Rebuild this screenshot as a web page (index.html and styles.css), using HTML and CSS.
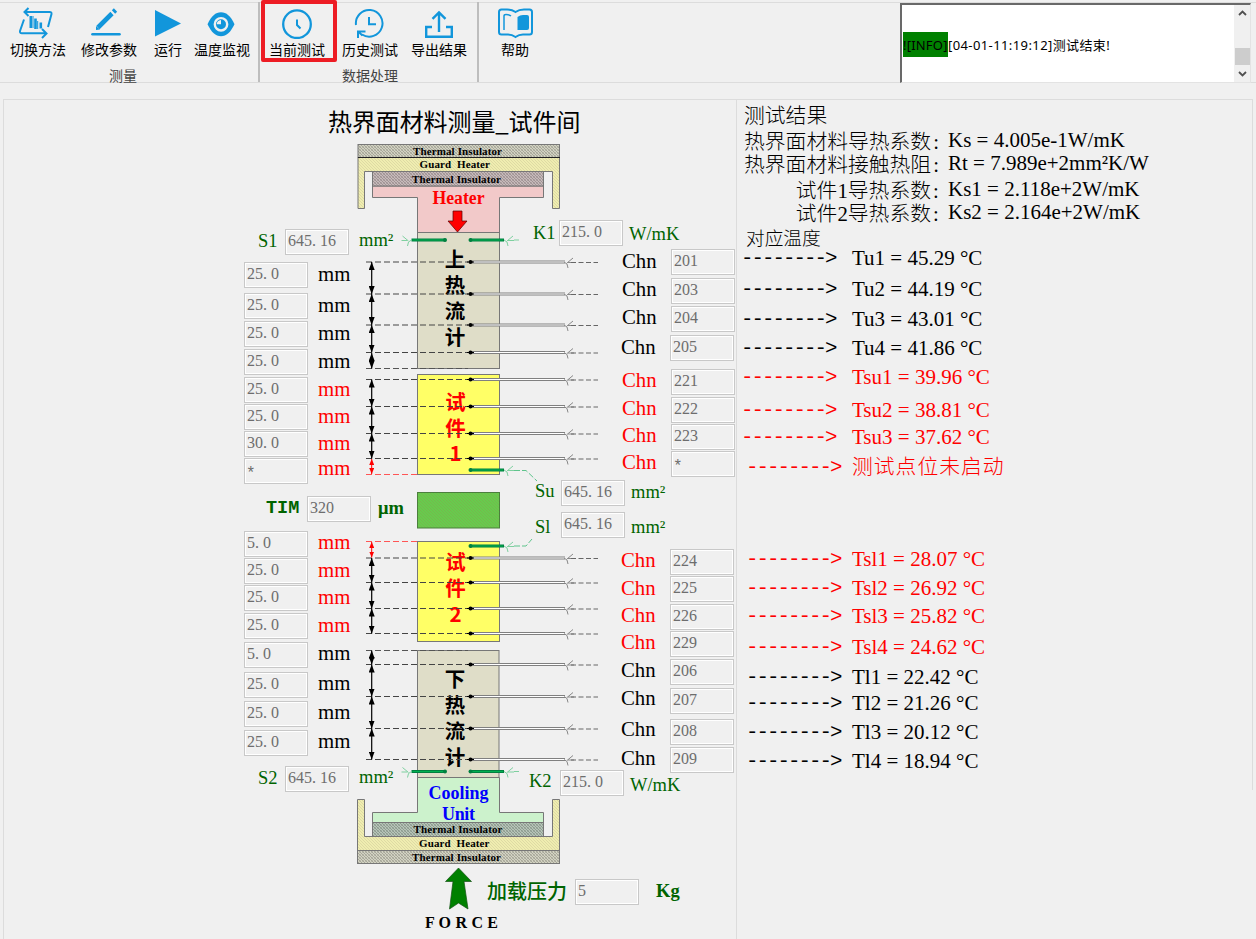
FILE: index.html
```html
<!DOCTYPE html>
<html lang="zh-CN">
<head>
<meta charset="utf-8">
<title>热界面材料测量</title>
<link rel="stylesheet" href="styles.css">
</head>
<body>
<header class="toolbar">
  <section class="group group-measure">
    <div class="buttons">
      <button class="tool w72"><svg class="icon shift-l3" width="36" height="34" viewBox="17 5 36 34"><g fill="none" stroke="#1296db" stroke-width="2"><path d="M25 12H49.500Q51.800 12 51.500 14L48 27M28.500 8L24.500 12L28.500 16M24 19.500L20 31Q19.500 33 22 33.300H46M42 29L46.500 33.500L42 38"/><path d="M30.800 16V28M35.500 18.500V29M40.800 22.500V28.500" stroke-width="2.600"/><path d="M33 16V28M37.700 21V29" stroke-width="1"/></g></svg><span>切换方法</span></button>
      <button class="tool w70"><svg class="icon shift-l3" width="36" height="34" viewBox="88 5 36 34"><g fill="none" stroke="#1296db"><path d="M98 27.500L112 13.500" stroke-width="4.600"/><path d="M113.500 12L115.500 10" stroke-width="4.600"/><path d="M92.500 34.200H119.500" stroke-width="2.600" stroke-linecap="round"/></g><path d="M96 30V26L100 29.500Z" fill="#1296db"/></svg><span>修改参数</span></button>
      <button class="tool w48"><svg class="icon" width="36" height="34" viewBox="150 5 36 34"><path d="M155 10L181 23.500L155 36.500Z" fill="#1296db"/></svg><span>运行</span></button>
      <button class="tool w60"><svg class="icon" width="36" height="34" viewBox="204.500 5 36 34"><path d="M208 24.300C212 16 216 12.300 221.500 12.300S231 16 235 24.300C231 32.500 227 36.300 221.500 36.300S212 32.500 208 24.300Z" fill="#1296db"/><circle cx="221.500" cy="24.300" r="6.200" fill="#1296db" stroke="#f0f0f0" stroke-width="2.400"/><path d="M221.500 20V24.300H217.200Q217.500 20.500 221.500 20Z" fill="#f0f0f0"/></svg><span>温度监视</span></button>
    </div>
    <div class="group-name">测量</div>
  </section>
  <section class="group group-data">
    <div class="buttons">
      <button class="tool current"><svg class="icon" width="36" height="34" viewBox="279 5 36 34"><circle cx="297" cy="24.200" r="13.800" fill="none" stroke="#1296db" stroke-width="2.300"/><path d="M297 19.500V25L300.500 28.500" fill="none" stroke="#1296db" stroke-width="2"/></svg><span>当前测试</span></button>
      <button class="tool w66"><svg class="icon" width="36" height="34" viewBox="352 5 36 34"><g fill="none" stroke="#1296db" stroke-width="2"><path d="M356 25A13.300 13.300 0 1 1 362 34.500"/><path d="M369 17V24.300H376"/><path d="M358 38V31.500H365.500M358 31.500L362.500 35.500"/></g></svg><span>历史测试</span></button>
      <button class="tool w72"><svg class="icon" width="36" height="34" viewBox="421 5 36 34"><g fill="none" stroke="#1296db" stroke-width="2.400"><path d="M432 27H426.200V36.800H451.800V27H446"/><path d="M439 32V13M432.500 18.800L439 12.500L445.500 18.800"/></g></svg><span>导出结果</span></button>
    </div>
    <div class="group-name">数据处理</div>
  </section>
  <section class="group group-help">
    <div class="buttons">
      <button class="tool w72"><svg class="icon" width="38" height="34" viewBox="496 5 38 34"><g fill="none" stroke="#1296db" stroke-width="2"><path d="M515.500 12Q512 9.500 507 9.500H501.500Q499 9.500 499 12V32Q499 34.500 501.500 34.500H508Q512 34.500 515.500 37Q519 34.500 523 34.500H529.500Q532 34.500 532 32V12Q532 9.500 529.500 9.500H524Q519 9.500 515.500 12Z"/><path d="M504 30V16Q504 14.500 506 14.500Q509 14.500 511 16" stroke-width="1.500"/></g><path d="M517.500 17Q520 15 523 15H527Q529 15 529 17V28Q529 30 527 30H517.500Z" fill="#1296db"/></svg><span>帮助</span></button>
    </div>
  </section>
  <div class="console">
    <p class="log"><span class="level">![INFO]</span><span class="entry">[04-01-11:19:12]测试结束!</span></p>
    <div class="scrollbar">
      <svg width="9" height="6" viewBox="0 0 9 6"><path d="M1 5L4.500 1.500L8 5" fill="none" stroke="#505050" stroke-width="1.800"/></svg>
      <i class="thumb"></i>
      <svg width="9" height="6" viewBox="0 0 9 6"><path d="M1 1L4.500 4.500L8 1" fill="none" stroke="#505050" stroke-width="1.800"/></svg>
    </div>
  </div>
</header>

<main class="workspace">
  <section class="rig">
    <h1 class="title">热界面材料测量_试件间</h1>
    <div class="rig-columns">
      <div class="lengths">
        <div class="row side-in"><b class="tag s-tag">S1</b><span class="field">645<i>.</i>16</span><b class="tag unit-up">mm²</b></div>
        <div class="row"><span class="field">25<i>.</i>0</span><b class="mm">mm</b></div>
        <div class="row"><span class="field">25<i>.</i>0</span><b class="mm">mm</b></div>
        <div class="row"><span class="field">25<i>.</i>0</span><b class="mm">mm</b></div>
        <div class="row"><span class="field">25<i>.</i>0</span><b class="mm">mm</b></div>
        <div class="row red"><span class="field">25<i>.</i>0</span><b class="mm">mm</b></div>
        <div class="row red"><span class="field">25<i>.</i>0</span><b class="mm">mm</b></div>
        <div class="row red"><span class="field">30<i>.</i>0</span><b class="mm">mm</b></div>
        <div class="row red"><span class="field star">*</span><b class="mm raised">mm</b></div>
        <div class="row tim-row"><b class="tag tim">TIM</b><span class="field">320</span><b class="tag strong">μm</b></div>
        <div class="row red"><span class="field">5<i>.</i>0</span><b class="mm raised1">mm</b></div>
        <div class="row red"><span class="field">25<i>.</i>0</span><b class="mm">mm</b></div>
        <div class="row red"><span class="field">25<i>.</i>0</span><b class="mm">mm</b></div>
        <div class="row red"><span class="field">25<i>.</i>0</span><b class="mm">mm</b></div>
        <div class="row"><span class="field">5<i>.</i>0</span><b class="mm raised1">mm</b></div>
        <div class="row"><span class="field">25<i>.</i>0</span><b class="mm raised1">mm</b></div>
        <div class="row"><span class="field">25<i>.</i>0</span><b class="mm raised1">mm</b></div>
        <div class="row"><span class="field">25<i>.</i>0</span><b class="mm raised1">mm</b></div>
        <div class="row side-in"><b class="tag s-tag">S2</b><span class="field">645<i>.</i>16</span><b class="tag unit-up">mm²</b></div>
      </div>

      <svg class="drawing" width="272" height="799" viewBox="350 140 272 799">
        <defs>
          <pattern id="hatch-gray" width="3" height="3" patternUnits="userSpaceOnUse"><rect width="3" height="3" fill="#d2d2c2"/><path d="M0 .5H1M1 1.500H2M2 2.500H3" stroke="#a6a698"/><path d="M2 .5H3M0 2.500H1" stroke="#babaac"/></pattern>
          <pattern id="hatch-rose" width="3" height="3" patternUnits="userSpaceOnUse"><rect width="3" height="3" fill="#c6baba"/><path d="M0 .5H1M1 1.500H2M2 2.500H3" stroke="#9f9293"/><path d="M2 .5H3M0 2.500H1" stroke="#b0a4a5"/></pattern>
          <pattern id="hatch-mint" width="3" height="3" patternUnits="userSpaceOnUse"><rect width="3" height="3" fill="#b6c4b8"/><path d="M0 .5H1M1 1.500H2M2 2.500H3" stroke="#8d9b8f"/><path d="M2 .5H3M0 2.500H1" stroke="#a0aea2"/></pattern>
          <pattern id="hatch-cream" width="3" height="3" patternUnits="userSpaceOnUse"><rect width="3" height="3" fill="#efedb0"/><path d="M0 .5H1M1 1.500H2M2 2.500H3" stroke="#dedaa4"/></pattern>
          <pattern id="hatch-green" width="3" height="3" patternUnits="userSpaceOnUse"><rect width="3" height="3" fill="#66cc4d"/><path d="M0 .5H1M1 1.500H2M2 2.500H3" stroke="#75b84d"/></pattern>
          <marker id="tip" viewBox="0 0 8 6" refX="8" refY="3" markerWidth="8" markerHeight="6" markerUnits="userSpaceOnUse" orient="auto-start-reverse"><path d="M0 0L8 3L0 6Z" fill="#000"/></marker>
          <marker id="tip-red" viewBox="0 0 6 5" refX="6" refY="2.500" markerWidth="6" markerHeight="5" markerUnits="userSpaceOnUse" orient="auto-start-reverse"><path d="M0 0L6 2.500L0 5Z" fill="#f00"/></marker>
          <g id="fork" fill="none"><path d="M0 0Q4 1 4 6M3 1L9 -4M4 .5H10"/></g>
          <g id="probe">
            <path d="M366 0H468" stroke="#444" stroke-dasharray="6 3"/>
            <path d="M472 0H565" stroke="#808080" stroke-width="3"/>
            <path d="M473 0H565" stroke="#fff"/>
            <circle cx="470.500" cy="0" r="2"/><path d="M467 0H474" stroke="#000"/>
            <use href="#fork" x="564" stroke="#888"/>
            <path d="M571 .5H598" stroke="#666" stroke-dasharray="5 2.500"/>
          </g>
          <g id="pin"><path d="M470 0H504" stroke="#008040" stroke-width="3"/><path d="M472 0H503" stroke="#00b050"/><circle cx="470.500" cy="0" r="2" fill="#008040"/><use href="#fork" x="504" stroke="#7fd0a0"/></g>
          <g id="pin-pair"><use href="#pin"/><path d="M514 0H522" stroke="#7fd0a0" stroke-dasharray="5 3"/><use href="#pin" transform="translate(915.500 0) scale(-1 1)"/></g>
        </defs>

        <g stroke="#777">
          <rect x="358" y="144.500" width="201.500" height="13" fill="url(#hatch-gray)"/>
          <path d="M358 157.500H559.500V208.500H552.500V171.500H364.500V208.500H358Z" fill="url(#hatch-cream)"/>
          <path d="M358 157.500H560" stroke="#222"/>
          <path d="M372.500 186V197.500H417.500V232.500H499.500V197.500H543.500V186Z" fill="#f2c9c9"/>
          <rect x="372.500" y="171.500" width="171" height="14.500" fill="url(#hatch-rose)"/>
          <rect x="417.500" y="232.500" width="82" height="136" fill="#dfddc8"/>
          <rect x="417.500" y="374.500" width="82" height="100" fill="#ff6"/>
          <rect x="417.500" y="492.500" width="82" height="35.500" fill="url(#hatch-green)" stroke="#4b7f3d"/>
          <rect x="417.500" y="541.500" width="82" height="100" fill="#ff6"/>
          <rect x="417.500" y="650.500" width="81.500" height="127" fill="#dfddc8"/>
          <path d="M417.500 777.500V812.500H372.500V822.500H543.500V812.500H499.500V777.500Z" fill="#ccf2cc"/>
          <rect x="372.500" y="822.500" width="171" height="14" fill="url(#hatch-mint)"/>
          <path d="M357.500 799.500H364.500V836.500H552.500V799.500H559.500V850.500H357.500Z" fill="url(#hatch-cream)"/>
          <rect x="357.500" y="850.500" width="202" height="13" fill="url(#hatch-gray)"/>
        </g>
        <path d="M453 211H462V221H467L457.500 232L448 221H453Z" fill="#f00" stroke="#500" stroke-width=".7"/>
        <path d="M458.500 868L471.500 881.500H464L468 909L458.500 903L449.500 909L453 881.500H445.500Z" fill="#008000" stroke="#145214" stroke-width=".7"/>

        <g class="cell-name">
          <text x="455" y="267">上</text><text x="455" y="293">热</text><text x="455" y="319">流</text><text x="455" y="345">计</text>
          <text x="455" y="687">下</text><text x="455" y="713">热</text><text x="455" y="739">流</text><text x="455" y="765">计</text>
        </g>
        <g class="cell-name sample">
          <text x="455.500" y="410">试</text><text x="455.500" y="436">件</text><text x="455.500" y="461">1</text>
          <text x="455.500" y="570">试</text><text x="455.500" y="596">件</text><text x="455.500" y="622">2</text>
        </g>

        <g>
          <use href="#probe" y="262"/><use href="#probe" y="294"/><use href="#probe" y="325"/><use href="#probe" y="352.500"/>
          <use href="#probe" y="379.500"/><use href="#probe" y="406.500"/><use href="#probe" y="433.500"/><use href="#probe" y="458.500"/>
          <use href="#probe" y="558"/><use href="#probe" y="582.500"/><use href="#probe" y="608.500"/><use href="#probe" y="633.500"/>
          <use href="#probe" y="664.500"/><use href="#probe" y="696.500"/><use href="#probe" y="728.500"/><use href="#probe" y="759.500"/>
          <path d="M366 368.500H468M366 650.500H468" stroke="#555" stroke-dasharray="6 3"/>
          <path d="M366 474.500H417M366 541.500H417" stroke="#f55" stroke-dasharray="6 3"/>
        </g>
        <g stroke="#000" stroke-width="1.200">
          <path class="dim" d="M371.700 262V294"/><path class="dim" d="M371.700 294V325"/><path class="dim" d="M371.700 325V352.500"/><path class="dim" d="M371.700 353V368.500"/>
          <path class="dim" d="M371.700 379.500V406.500"/><path class="dim" d="M371.700 406.500V433.500"/><path class="dim" d="M371.700 433.500V458.500"/>
          <path class="dim" d="M371.700 558V582.500"/><path class="dim" d="M371.700 582.500V608.500"/><path class="dim" d="M371.700 608.500V633.500"/>
          <path class="dim" d="M371.700 650.500V664.500"/><path class="dim" d="M371.700 664.500V696.500"/><path class="dim" d="M371.700 696.500V728.500"/><path class="dim" d="M371.700 728.500V759.500"/>
        </g>
        <path class="dim-red" d="M371.700 459V474"/><path class="dim-red" d="M371.700 542V557.500"/>
        <use href="#pin-pair" y="240"/><use href="#pin-pair" y="771.500"/>
        <use href="#pin" y="470"/><use href="#pin" y="546"/>
        <path d="M514 470.500H526L537 481M514 546H526L532 539" fill="none" stroke="#5fc48c" stroke-dasharray="6 2"/>

        <g class="part">
          <text x="413" y="155" textLength="89">Thermal Insulator</text>
          <text x="419.500" y="168" textLength="70.500" xml:space="preserve">Guard  Heater</text>
          <text x="412" y="182.500" textLength="89">Thermal Insulator</text>
          <text x="413.500" y="833" textLength="89">Thermal Insulator</text>
          <text x="419" y="847" textLength="70.500" xml:space="preserve">Guard  Heater</text>
          <text x="412" y="861" textLength="89">Thermal Insulator</text>
        </g>
        <text class="heater" x="432.500" y="204" textLength="52" lengthAdjust="spacingAndGlyphs">Heater</text>
        <text class="cooler" x="428.500" y="799" textLength="60">Cooling</text>
        <text class="cooler" x="442" y="820" textLength="33">Unit</text>
        <text class="force" x="425" y="927.500" textLength="73" xml:space="preserve">F O R C E</text>
      </svg>

      <div class="channels">
        <div class="row"><b class="chn low">Chn</b><span class="field">201</span></div>
        <div class="row"><b class="chn">Chn</b><span class="field">203</span></div>
        <div class="row"><b class="chn">Chn</b><span class="field">204</span></div>
        <div class="row left1"><b class="chn low">Chn</b><span class="field">205</span></div>
        <div class="row red"><b class="chn">Chn</b><span class="field">221</span></div>
        <div class="row red"><b class="chn">Chn</b><span class="field">222</span></div>
        <div class="row red"><b class="chn">Chn</b><span class="field">223</span></div>
        <div class="row red"><b class="chn">Chn</b><span class="field star">*</span></div>
        <div class="row red left1"><b class="chn">Chn</b><span class="field">224</span></div>
        <div class="row red left1"><b class="chn low">Chn</b><span class="field">225</span></div>
        <div class="row red left1"><b class="chn">Chn</b><span class="field">226</span></div>
        <div class="row red left1"><b class="chn">Chn</b><span class="field">229</span></div>
        <div class="row left1"><b class="chn">Chn</b><span class="field">206</span></div>
        <div class="row left1"><b class="chn high">Chn</b><span class="field">207</span></div>
        <div class="row left1"><b class="chn high">Chn</b><span class="field">208</span></div>
        <div class="row left1"><b class="chn">Chn</b><span class="field">209</span></div>
      </div>
    </div>

    <div class="note note-k1"><b class="tag">K1</b><span class="field">215<i>.</i>0</span><b class="tag">W/mK</b></div>
    <div class="note note-su"><b class="tag">Su</b><span class="field">645<i>.</i>16</span><b class="tag">mm²</b></div>
    <div class="note note-sl"><b class="tag">Sl</b><span class="field">645<i>.</i>16</span><b class="tag">mm²</b></div>
    <div class="note note-k2"><b class="tag">K2</b><span class="field">215<i>.</i>0</span><b class="tag">W/mK</b></div>
    <div class="note note-load"><b class="tag load">加载压力</b><span class="field">5</span><b class="tag strong">Kg</b></div>
  </section>

  <section class="results">
    <h2 class="results-title">测试结果</h2>
    <dl class="summary">
      <dt>热界面材料导热系数<em>:</em></dt><dd>Ks = 4.005e-1W/mK</dd>
      <dt>热界面材料接触热阻<em>:</em></dt><dd>Rt = 7.989e+2mm²K/W</dd>
      <dt>试件1导热系数<em>:</em></dt><dd>Ks1 = 2.118e+2W/mK</dd>
      <dt>试件2导热系数<em>:</em></dt><dd>Ks2 = 2.164e+2W/mK</dd>
    </dl>
    <h3 class="temps-title">对应温度</h3>
    <div class="temps">
      <div class="temp"><span class="arrow">--------&gt;</span><span>Tu1 = 45.29 °C</span></div>
      <div class="temp"><span class="arrow">--------&gt;</span><span>Tu2 = 44.19 °C</span></div>
      <div class="temp"><span class="arrow">--------&gt;</span><span>Tu3 = 43.01 °C</span></div>
      <div class="temp"><span class="arrow">--------&gt;</span><span>Tu4 = 41.86 °C</span></div>
      <div class="temp red"><span class="arrow">--------&gt;</span><span>Tsu1 = 39.96 °C</span></div>
      <div class="temp red"><span class="arrow">--------&gt;</span><span>Tsu2 = 38.81 °C</span></div>
      <div class="temp red"><span class="arrow">--------&gt;</span><span>Tsu3 = 37.62 °C</span></div>
      <div class="temp red in"><span class="arrow">--------&gt;</span><span class="off">测试点位未启动</span></div>
      <div class="temp red in"><span class="arrow">--------&gt;</span><span>Tsl1 = 28.07 °C</span></div>
      <div class="temp red in"><span class="arrow">--------&gt;</span><span>Tsl2 = 26.92 °C</span></div>
      <div class="temp red in"><span class="arrow">--------&gt;</span><span>Tsl3 = 25.82 °C</span></div>
      <div class="temp red in"><span class="arrow">--------&gt;</span><span>Tsl4 = 24.62 °C</span></div>
      <div class="temp in"><span class="arrow">--------&gt;</span><span>Tl1 = 22.42 °C</span></div>
      <div class="temp in"><span class="arrow">--------&gt;</span><span>Tl2 = 21.26 °C</span></div>
      <div class="temp in"><span class="arrow">--------&gt;</span><span>Tl3 = 20.12 °C</span></div>
      <div class="temp in"><span class="arrow">--------&gt;</span><span>Tl4 = 18.94 °C</span></div>
    </div>
  </section>
</main>
</body>
</html>
```
FILE: styles.css
```css
* { box-sizing: border-box; }
body {
  margin: 0;
  width: 1256px;
  height: 939px;
  overflow: hidden;
  background: #f0f0f0;
  color: #000;
  font-family: "Liberation Serif", "Noto Sans CJK SC", serif;
}
b, i, em { font-weight: normal; font-style: normal; }

/* Toolbar */
.toolbar {
  display: flex;
  height: 83px;
  background: linear-gradient(#dcdcdc, #dcdcdc) 0 2px / 100% 1px no-repeat, #f0f0f0;
  border-bottom: 1px solid #dcdcdc;
  font-family: "Noto Sans CJK SC", sans-serif;
}
.group {
  display: flex;
  flex-direction: column;
  flex: none;
  background: linear-gradient(#bdbdbd, #bdbdbd) right 2px / 2px 100% no-repeat;
}
.group-measure { width: 260px; padding-left: 2px; }
.group-data { width: 219px; padding-left: 1px; }
.group-help { width: 421px; background: none; }
.buttons { display: flex; height: 63px; }
.tool {
  display: flex;
  flex-direction: column;
  align-items: center;
  height: 62px;
  padding: 5px 0 0;
  border: 0;
  background: none;
  color: #000;
  font: 14px/20px "Noto Sans CJK SC", sans-serif;
  white-space: nowrap;
}
.tool .icon { flex: none; }
.shift-l3 { transform: translateX(-3px); }
.w72 { width: 72px; }
.w70 { width: 70px; }
.w66 { width: 66px; }
.w60 { width: 60px; }
.w48 { width: 48px; }
.current { width: 76px; padding: 1px 4px 0 0; border: 4px solid #ed1c24; border-radius: 2px; }
.group-name { color: #444; font-size: 14px; line-height: 20px; text-align: center; padding-top: 3px; }
.group-measure .group-name { padding-right: 16px; }
.console {
  display: flex;
  justify-content: space-between;
  width: 351px;
  height: 80px;
  margin-top: 3px;
  background: #fff;
  border: 2px solid #696969;
  border-width: 2px 1px 1px 2px;
  border-right-color: #e3e3e3;
  border-bottom-color: #e3e3e3;
}
.log { display: flex; margin: 27px 0 0 1px; font: 13px/26px "Noto Sans", "Noto Sans CJK SC", sans-serif; height: 25px; white-space: nowrap; }
.level { background: #008000; width: 45px; height: 25px; letter-spacing: .2px; }
.entry { letter-spacing: .4px; }
.scrollbar { display: flex; flex-direction: column; align-items: center; width: 16px; padding: 5px 0; background: #f0f0f0; }
.thumb { width: 15px; height: 17px; margin: 32px 0 6px; background: #cdcdcd; }

/* Workspace */
.workspace { display: flex; height: 840px; margin: 16px 2px 0 3px; }
.rig { position: relative; width: 734px; height: 840px; border: solid #dcdcdc; border-width: 1px 1px 0 1px; }
.title { margin: 4px 0 2px; padding-left: 324px; height: 34px; font: 24px/34px "Noto Sans CJK SC", sans-serif; letter-spacing: -.1px; }
.rig-columns { display: grid; grid-template-columns: 106px 272px 114px; padding-left: 240px; }
.row { display: flex; align-items: flex-start; white-space: nowrap; }
.red { color: #f00; }
.field {
  flex: none;
  width: 64px;
  height: 26px;
  padding-left: 2px;
  border: 1px solid #c8c8c8;
  box-shadow: inset 0 0 0 1px #fff;
  color: #6d6d6d;
  font: 16px/22px "Liberation Serif", serif;
}
.field i { letter-spacing: 4px; }
.star { padding-left: 1px; font-family: "Liberation Mono", monospace; line-height: 30px; }
.mm, .chn { font-size: 20.8px; line-height: 23px; }
.mm { margin-left: 10px; }
.raised { margin-top: -2px; }
.raised1 { margin-top: -1px; }
.tag { color: #006400; font-size: 18.5px; line-height: 22px; }
.strong { font-weight: bold; }

.lengths {
  display: grid;
  align-content: start;
  padding-top: 89px;
  grid-template-rows: 33px 31px 28px 28px 28px 27px 27px 27px 38px 35px 27px 27px 28px 29px 30px 29px 29px 36px 26px;
}
.side-in { padding-left: 14px; }
.s-tag { width: 27px; flex: none; margin-top: 1px; }
.unit-up { margin: 0 0 0 10px; }
.tim-row { padding-left: 22px; }
.tim { width: 41px; flex: none; margin-top: 1px; font: bold 18.500px/24px "Liberation Mono", monospace; }
.tim-row .strong { margin: 1px 0 0 7px; }

.channels {
  display: grid;
  align-content: start;
  padding-top: 109px;
  grid-template-rows: 29px 28px 29px 34px 28px 27px 27px 98px 27px 28px 27px 28px 29px 31px 28px 26px;
}
.channels .row { justify-content: space-between; padding-right: 1px; }
.channels .left1 { margin-left: -1px; padding-right: 2px; }
.chn { margin-top: -1px; }
.low { margin-top: 0; }
.high { margin-top: -2px; }
.drawing { display: block; }
.part { font: bold 11px "Liberation Serif", serif; }
.heater { font: bold 18.500px "Liberation Serif", serif; fill: #f00; }
.cooler { font: bold 18px "Liberation Serif", serif; fill: #00f; }
.force { font: bold 16px "Liberation Serif", serif; }
.cell-name { font: bold 20.500px "Noto Sans CJK SC", sans-serif; text-anchor: middle; }
.sample { fill: #f00; }
.dim { marker-start: url(#tip); marker-end: url(#tip); }
.dim-red { stroke: #f00; marker-start: url(#tip-red); marker-end: url(#tip-red); }

/* Labelled fields pinned onto the drawing */
.note { position: absolute; display: flex; align-items: flex-start; gap: 6px; white-space: nowrap; }
.note .tag:first-child { flex: none; width: 20px; }
.note-k1 { left: 529px; top: 120px; }
.note-k1 .tag { margin-top: 2px; }
.note-k1 .tag:last-child { margin-top: 3px; }
.note-su { left: 531px; top: 380px; }
.note-su .tag:last-child { margin-top: 1px; }
.note-sl { left: 531px; top: 412px; }
.note-sl .tag { margin-top: 4px; }
.note-k2 { left: 525px; top: 670px; }
.note-k2 .tag:first-child { width: 25px; }
.note-k2 .tag:last-child { margin-top: 4px; }
.note-load { left: 483px; top: 779px; }
.note-load .tag.load { width: 82px; font-size: 20px; font-weight: 500; line-height: 26px; }
.note-load .strong { margin: 1px 0 0 11px; }

/* Results */
.results { width: 516px; height: 691px; border: solid #dcdcdc; border-width: 1px 1px 0 0; font-size: 21px; }
.results-title { margin: 4px 0 0 7px; height: 25px; font-size: 20.800px; line-height: 24px; font-weight: 300; }
.summary { display: grid; grid-template-columns: 197px 1fr; grid-template-rows: 23px 26px 23px 22px; column-gap: 7px; margin: 0 0 0 7px; line-height: 22px; white-space: nowrap; }
.summary dt { font-size: 20.800px; font-weight: 300; text-align: right; line-height: 25px; }
.summary dt em { display: inline-block; width: 10px; text-align: center; line-height: 20px; }
.summary dd { margin: 0; font-size: 21px; }
.temps-title { margin: 5px 0 0 9px; height: 19px; font-size: 18.700px; line-height: 22px; font-weight: 300; }
.temps { display: grid; grid-template-rows: 31px 30px 29px 29px 33px 27px 30px 92px 29px 28px 31px 30px 26px 29px 29px 22px; line-height: 22px; }
.temp { display: grid; grid-template-columns: 111px 1fr; padding-left: 4px; white-space: nowrap; }
.temp.in { grid-template-columns: 106px 1fr; padding-left: 9px; }
.arrow { padding-top: 1px; font: 20.800px/22px "Liberation Mono", monospace; letter-spacing: -1.980px; }
.off { font-weight: 300; font-size: 20.800px; letter-spacing: 1px; }
```
